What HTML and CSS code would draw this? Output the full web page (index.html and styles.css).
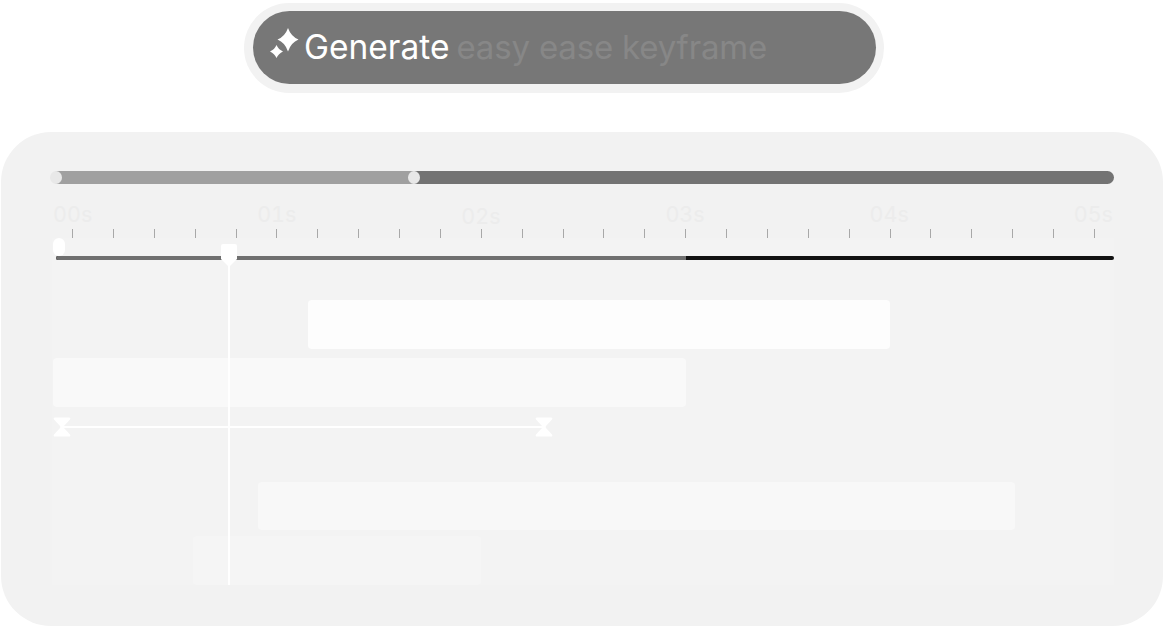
FILE: index.html
```html
<!DOCTYPE html>
<html lang="en">
<head>
<meta charset="utf-8">
<title>Generate easy ease keyframe</title>
<link rel="stylesheet" href="styles.css">
</head>
<body>
<main class="page">
  <div class="prompt-ring">
    <div class="prompt">
      <svg class="sparkle" width="32" height="32" viewBox="0 0 32 32" aria-hidden="true">
        <path d="M19 0 Q22 8.500 29.500 11.500 Q22 14.500 19 23.500 Q16 14.500 8.500 11.500 Q16 8.500 19 0Z"/>
        <path d="M7.500 17 Q9.500 21.500 14 23.500 Q9.500 25.500 7.500 30 Q5.500 25.500 1 23.500 Q5.500 21.500 7.500 17Z"/>
      </svg>
      <span class="prompt-label">Generate</span>
      <span class="prompt-hint">easy ease keyframe</span>
    </div>
  </div>

  <section class="panel">
    <div class="scrub">
      <div class="scrub-fill"></div>
      <span class="knob knob-start"></span>
      <span class="knob knob-mid"></span>
    </div>

    <div class="labels">
      <span>00s</span><span>01s</span><span class="label-low">02s</span><span>03s</span><span>04s</span><span>05s</span>
    </div>

    <div class="ticks">
      <i></i><i></i><i></i><i></i><i></i><i></i><i></i><i></i><i></i><i></i><i></i><i></i><i></i>
      <i></i><i></i><i></i><i></i><i></i><i></i><i></i><i></i><i></i><i></i><i></i><i></i><i></i>
    </div>

    <div class="lanes">
      <div class="progress"><div class="progress-done"></div></div>
      <span class="start-pin"></span>

      <div class="clip clip-a"></div>
      <div class="clip clip-b"></div>
      <div class="span-row">
        <svg class="hourglass" width="18" height="20" viewBox="0 0 18 20" aria-hidden="true"><path d="M2 0.500 H16 Q18 0.500 17 2.500 L11 9 Q10.200 10 11 11 L17 17.500 Q18 19.500 16 19.500 H2 Q0 19.500 1 17.500 L7 11 Q7.800 10 7 9 L1 2.500 Q0 0.500 2 0.500Z"/></svg>
        <div class="span-line"></div>
        <svg class="hourglass" width="18" height="20" viewBox="0 0 18 20" aria-hidden="true"><path d="M2 0.500 H16 Q18 0.500 17 2.500 L11 9 Q10.200 10 11 11 L17 17.500 Q18 19.500 16 19.500 H2 Q0 19.500 1 17.500 L7 11 Q7.800 10 7 9 L1 2.500 Q0 0.500 2 0.500Z"/></svg>
      </div>
      <div class="clip clip-c"></div>
      <div class="clip clip-d"></div>

      <div class="playhead">
        <svg class="playhead-cap" width="16" height="24" viewBox="0 0 16 24" aria-hidden="true"><path d="M2 0 H14 Q16 0 16 2 V15 L8 23 L0 15 V2 Q0 0 2 0Z"/></svg>
        <div class="playhead-line"></div>
      </div>
    </div>
  </section>
</main>
</body>
</html>
```

FILE: styles.css
```css
* { box-sizing: border-box; }

html, body {
  margin: 0;
  height: 100%;
  background: #fff;
  overflow: hidden;
}

body {
  font-family: Inter, "Liberation Sans", sans-serif;
}

.page {
  display: flex;
  flex-direction: column;
  align-items: flex-start;
  width: 1164px;
  height: 628px;
}

/* prompt pill */
.prompt-ring {
  align-self: flex-start;
  width: 640px;
  height: 90px;
  margin: 3px 0 0 244px;
  padding: 8px 8px 8px 9px;
  border-radius: 45px;
  background: #f2f2f2;
}

.prompt {
  display: flex;
  align-items: center;
  height: 73px;
  padding: 0 0 0 16px;
  border-radius: 37px;
  background: #777;
  line-height: 1;
  white-space: nowrap;
}

.sparkle {
  flex: none;
  margin: -7px 3px 0 0;
  fill: #fff;
}

.prompt-label {
  color: #fff;
  font-size: 33.5px;
  font-weight: 400;
}

.prompt-hint {
  margin-left: 7px;
  color: #878787;
  font-size: 33px;
  letter-spacing: -0.17px;
}

/* main panel */
.panel {
  width: 1162px;
  height: 494px;
  margin: 39px 0 0 1px;
  padding: 39px 49px 0 51px;
  border-radius: 50px;
  background: #f2f2f2;
}

.scrub {
  position: relative;
  width: 1062px;
  height: 13px;
  border-radius: 7px;
  background: #737373;
}

.scrub-fill {
  width: 362px;
  height: 100%;
  border-radius: 7px 0 0 7px;
  background: #a0a0a0;
}

.knob {
  position: absolute;
  top: 0;
  width: 12px;
  height: 13px;
  border-radius: 50%;
  background: #e8e8e8;
}

.knob-start { left: -2px; }
.knob-mid { left: 356px; }

/* ruler */
.labels {
  display: flex;
  justify-content: space-between;
  width: 1060px;
  height: 26px;
  margin: 17px 0 2px 1px;
  color: #ececec;
  font-size: 21.5px;
  font-variant-numeric: tabular-nums;
  line-height: 26px;
}

.label-low {
  position: relative;
  top: 2px;
}

.ticks {
  display: flex;
  justify-content: space-between;
  width: 1023px;
  height: 9px;
  margin: 0 0 0 20px;
}

.ticks i {
  display: block;
  width: 1px;
  height: 9px;
  background: #a8a8a8;
}

/* lanes */
.lanes {
  position: relative;
  display: flex;
  flex-direction: column;
  width: 1062px;
  height: 347px;
  padding-top: 62px;
  background: #f3f3f3;
}

.progress {
  position: absolute;
  top: 18px;
  left: 4px;
  width: 1058px;
  height: 4px;
  border-radius: 2px;
  background: #111;
}

.progress-done {
  width: 630px;
  height: 100%;
  border-radius: 2px 0 0 2px;
  background: #6f6f6f;
}

.start-pin {
  position: absolute;
  top: 0;
  left: 1px;
  width: 12px;
  height: 18px;
  border-radius: 6px;
  background: #fff;
}

.clip {
  height: 49px;
  border-radius: 4px;
}

.clip-a {
  width: 582px;
  margin-left: 256px;
  background: #fdfdfd;
}

.clip-b {
  width: 633px;
  margin: 9px 0 0 1px;
  background: #f9f9f9;
}

.span-row {
  display: flex;
  align-items: center;
  width: 500px;
  height: 20px;
  margin: 10px 0 0 1px;
}

.hourglass {
  flex: none;
  fill: #fff;
}

.span-line {
  flex: 1;
  height: 2px;
  margin: 0 -8px;
  background: #fff;
}

.clip-c {
  width: 757px;
  margin: 45px 0 0 206px;
  background: #f8f8f8;
}

.clip-d {
  width: 288px;
  margin: 6px 0 0 141px;
  background: #f5f5f5;
}

.playhead {
  position: absolute;
  top: 6px;
  left: 169px;
  display: flex;
  flex-direction: column;
  align-items: center;
  width: 16px;
  height: 341px;
}

.playhead-cap {
  flex: none;
  fill: #fff;
}

.playhead-line {
  flex: 1;
  width: 2px;
  margin-top: -2px;
  background: #fff;
}
```
